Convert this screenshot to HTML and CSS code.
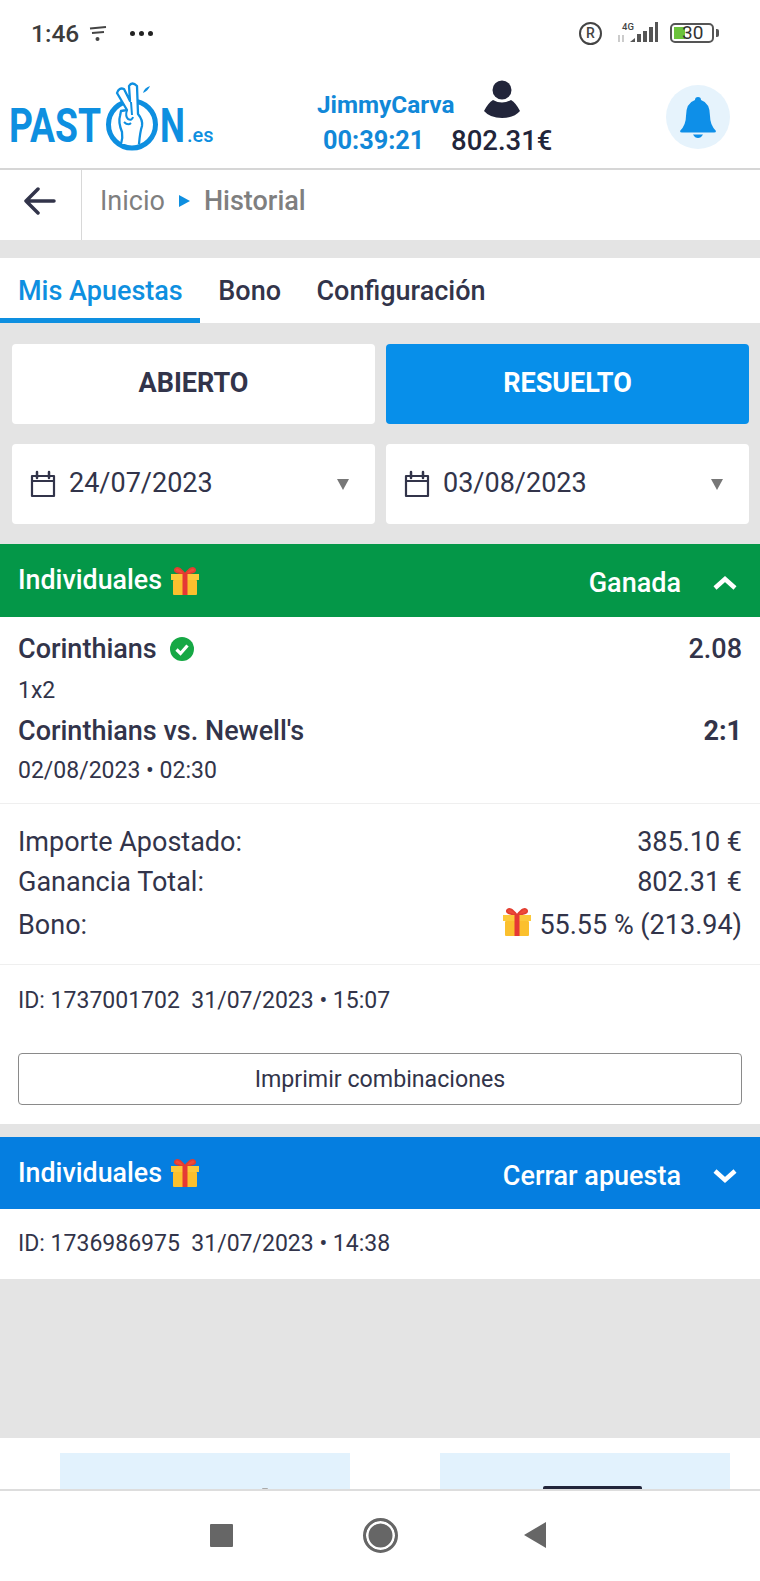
FILE: index.html
```html
<!DOCTYPE html>
<html lang="es">
<head>
  <meta charset="UTF-8">
  <meta name="viewport" content="width=device-width, initial-scale=1">
  <title>Historial</title>
  <link rel="stylesheet" href="styles.css">
</head>
<body>

  <div class="status-bar">
    <div class="status-left">
      <span class="clock">1:46</span>
      <svg class="status-wifi" width="18" height="18" viewBox="0 0 18 18"><path d="M1 4.500 L17 3M3 9 L15 8" fill="none" stroke="#444" stroke-width="2"/><circle cx="8.500" cy="15" r="2" fill="#444"/></svg>
      <span class="dots"><i></i><i></i><i></i></span>
    </div>
    <div class="status-right">
      <span class="reg">R</span>
      <svg class="signal" width="42" height="24" viewBox="0 0 42 24">
        <text x="5" y="9" font-size="9.500" font-family="Roboto" font-weight="500" fill="#444">4G</text>
        <path d="M2 21v-7M6 21v-7" stroke="#aaa" stroke-width="1.200"/>
        <path d="M13 21h5v-4zM20 21h4v-8h-4zM26 21h4V10h-4zM32 21h4V6h-4zM38 21h3V1h-3z" fill="#555"/>
      </svg>
      <span class="battery"><span class="battery-fill"></span><span class="battery-num">30</span></span>
      <span class="battery-tip"></span>
    </div>
  </div>

  <header class="site-header">
    <div class="logo">
      <svg width="220" height="88" viewBox="0 0 220 88">
        <text class="logo-text" transform="translate(9 70) scale(0.76 1)">PAST</text>
        <circle cx="132" cy="52.500" r="23.500" fill="#fff" stroke="#0e8fe0" stroke-width="5"/>
        <path d="M121 72 Q123 66 122 60 Q118 50 120 44 L121 39 L127 38 L117 21 Q119 15 124 17 L130 29 L129 14 Q132 9 137 14 L138 42 Q143 48 142 54 Q140 60 139 72" fill="#fff" stroke="#0e8fe0" stroke-width="2.300" stroke-linejoin="round"/>
        <path d="M131 30 L132 43 M127 38 Q125 44 128 47 Q132 49 133 45 M124 50 Q128 54 131 51" fill="none" stroke="#0e8fe0" stroke-width="2"/>
        <path d="M143 21 Q144 16 150 14 Q148 19 143 21Z" fill="#0e8fe0"/>
        <text class="logo-text" transform="translate(160 70) scale(0.72 1)">N</text>
        <text class="logo-es" x="187" y="70">.es</text>
      </svg>
    </div>
    <div class="account">
      <div class="account-left">
        <span class="username">JimmyCarva</span>
        <span class="timer">00:39:21</span>
      </div>
      <div class="account-right">
        <svg width="36" height="38" viewBox="0 0 36 38"><circle cx="18" cy="10" r="9.500" fill="#22253a"/><path d="M9 20 Q18 25 27 20 Q32 23 36 31 Q30 38 18 38 Q6 38 0 31 Q4 23 9 20Z" fill="#22253a"/></svg>
        <span class="balance">802.31€</span>
      </div>
    </div>
    <div class="bell">
      <svg width="36" height="41" viewBox="0 0 36 41"><path d="M18 0 Q21 0 21 3 Q30 6 30 19 Q30 28 36 34 Q36 35.500 34 35.500 H2 Q0 35.500 0 34 Q6 28 6 19 Q6 6 15 3 Q15 0 18 0Z" fill="#0e8fe8"/><path d="M13 37.500 H23 Q21 41 18 41 Q15 41 13 37.500Z" fill="#0e8fe8"/></svg>
    </div>
  </header>

  <nav class="breadcrumb">
    <div class="back">
      <svg width="32" height="28" viewBox="0 0 32 28"><path d="M14 2 L2 14 L14 26 M2 14 H30" fill="none" stroke="#32344a" stroke-width="3.500" stroke-linecap="round" stroke-linejoin="round"/></svg>
    </div>
    <div class="crumbs">
      <span class="crumb">Inicio</span>
      <span class="crumb-arrow"></span>
      <span class="crumb-current">Historial</span>
    </div>
  </nav>

  <div class="tabs">
    <a class="tab active">Mis Apuestas</a>
    <a class="tab">Bono</a>
    <a class="tab">Configuración</a>
  </div>

  <div class="toggle-row">
    <button class="toggle">ABIERTO</button>
    <button class="toggle selected">RESUELTO</button>
  </div>

  <div class="date-row">
    <div class="date-box">
      <svg class="cal" width="26" height="28" viewBox="0 0 26 28"><path d="M2 6 H24 V26 H2Z M2 11 H24" fill="none" stroke="#32344a" stroke-width="2.200" stroke-linejoin="round"/><path d="M7 2 V8 M19 2 V8" stroke="#32344a" stroke-width="2.500" stroke-linecap="round"/></svg>
      <span class="date-text">24/07/2023</span>
      <span class="caret"></span>
    </div>
    <div class="date-box">
      <svg class="cal" width="26" height="28" viewBox="0 0 26 28"><path d="M2 6 H24 V26 H2Z M2 11 H24" fill="none" stroke="#32344a" stroke-width="2.200" stroke-linejoin="round"/><path d="M7 2 V8 M19 2 V8" stroke="#32344a" stroke-width="2.500" stroke-linecap="round"/></svg>
      <span class="date-text">03/08/2023</span>
      <span class="caret"></span>
    </div>
  </div>

  <section class="bet">
    <div class="bet-head won">
      <div class="bet-title">Individuales
        <svg class="gift" width="30" height="28" viewBox="0 0 30 28"><use href="#gift-shape"/></svg>
      </div>
      <div class="bet-state">Ganada
        <svg class="chev" width="26" height="16" viewBox="0 0 26 16"><path d="M3 13 L13 4 L23 13" fill="none" stroke="#fff" stroke-width="4.500"/></svg>
      </div>
    </div>
    <div class="pick">
      <div class="line line-main">
        <span class="pick-name">Corinthians
          <svg class="tick" width="24" height="24" viewBox="0 0 24 24"><circle cx="12" cy="12" r="12" fill="#16a845"/><path d="M6.500 12.500 L10.500 16.500 L17.500 8.500" fill="none" stroke="#fff" stroke-width="3.200"/></svg>
        </span>
        <span class="odds">2.08</span>
      </div>
      <div class="line-sub market">1x2</div>
      <div class="line line-main match">
        <span>Corinthians vs. Newell's</span>
        <span class="score">2:1</span>
      </div>
      <div class="line-sub kickoff">02/08/2023 • 02:30</div>
    </div>
    <div class="totals">
      <div class="line total"><span>Importe Apostado:</span><span>385.10 €</span></div>
      <div class="line total"><span>Ganancia Total:</span><span>802.31 €</span></div>
      <div class="line total bonus"><span>Bono:</span>
        <span class="bonus-value">
          <svg class="gift-big" width="30" height="28" viewBox="0 0 30 28"><use href="#gift-shape"/></svg>
          55.55 % (213.94)
        </span>
      </div>
    </div>
    <div class="bet-id">ID: 1737001702&nbsp; 31/07/2023 • 15:07</div>
    <div class="print-wrap">
      <button class="print-btn">Imprimir combinaciones</button>
    </div>
  </section>

  <section class="bet bet-closed">
    <div class="bet-head open">
      <div class="bet-title">Individuales
        <svg class="gift" width="30" height="28" viewBox="0 0 30 28"><use href="#gift-shape"/></svg>
      </div>
      <div class="bet-state">Cerrar apuesta
        <svg class="chev" width="26" height="16" viewBox="0 0 26 16"><path d="M3 3 L13 12 L23 3" fill="none" stroke="#fff" stroke-width="4.500"/></svg>
      </div>
    </div>
    <div class="bet-id closed-id">ID: 1736986975&nbsp; 31/07/2023 • 14:38</div>
  </section>

  <div class="spacer"></div>

  <div class="promos">
    <div class="promo"><span class="promo-mark small"></span></div>
    <div class="promo"><span class="promo-mark"></span></div>
  </div>

  <div class="nav-bar">
    <span class="nav-square"></span>
    <span class="nav-home"></span>
    <span class="nav-back"></span>
  </div>

  <svg class="defs" width="0" height="0">
    <defs>
      <g id="gift-shape">
        <path d="M15 7 Q8 -2 5 2 Q3 6 15 7 Q22 -2 25 2 Q27 6 15 7Z" fill="#ee4b3a" stroke="#e23d30" stroke-width="1.500"/>
        <rect x="1" y="7" width="28" height="6" fill="#fcc93a"/>
        <rect x="3" y="13" width="24" height="15" rx="1" fill="#fbc02d"/>
        <rect x="12.500" y="7" width="5" height="21" fill="#e53935"/>
      </g>
    </defs>
  </svg>

</body>
</html>
```
FILE: styles.css
```css
* {
  box-sizing: border-box;
  margin: 0;
  padding: 0;
}

body {
  font-family: Roboto, Arial, sans-serif;
  background-color: #e4e4e4;
  color: #32344a;
  width: 760px;
  height: 1581px;
  overflow: hidden;
}

.defs {
  position: absolute;
}

/* status bar */
.status-bar {
  height: 72px;
  background: #fff;
  display: flex;
  justify-content: space-between;
  align-items: flex-start;
  padding: 19px 41px 0 31px;
}

.status-left, .status-right {
  display: flex;
  align-items: center;
  height: 28px;
}

.clock {
  font-size: 24.500px;
  font-weight: 500;
  color: #3c3c3c;
}

.status-wifi {
  margin-left: 10px;
}

.dots {
  display: flex;
  gap: 4px;
  margin-left: 23px;
}

.dots i {
  width: 5px;
  height: 5px;
  border-radius: 50%;
  background: #222;
}

.reg {
  width: 23px;
  height: 23px;
  border: 2px solid #444;
  border-radius: 50%;
  font-size: 14px;
  font-weight: 500;
  color: #444;
  display: flex;
  align-items: center;
  justify-content: center;
}

.signal {
  margin-left: 15px;
}

.battery {
  position: relative;
  width: 44px;
  height: 20px;
  margin-left: 11px;
  border: 2.500px solid #555;
  border-radius: 5px;
  padding: 2px;
}

.battery-fill {
  display: block;
  width: 11px;
  height: 100%;
  background: #6cc33c;
}

.battery-num {
  position: absolute;
  left: 10px;
  top: -2.500px;
  font-size: 19px;
  line-height: 20px;
  color: #333;
}

.battery-tip {
  width: 3px;
  height: 8px;
  background: #555;
  margin-left: 2px;
  border-radius: 0 2px 2px 0;
}

/* header */
.site-header {
  height: 98px;
  background: #fff;
  display: flex;
  align-items: flex-start;
  border-bottom: 2px solid #d6d6d6;
  position: relative;
}

.logo {
  width: 317px;
  height: 88px;
}

.logo-text {
  font-family: Roboto, sans-serif;
  font-size: 49px;
  font-weight: 700;
  fill: #0e8fe0;
}

.logo-es {
  font-family: Roboto, sans-serif;
  font-size: 20px;
  font-weight: 500;
  fill: #0e8fe0;
}

.account {
  display: flex;
}

.account-left {
  width: 134px;
  display: flex;
  flex-direction: column;
  padding-top: 20px;
  gap: 9px;
}

.username, .timer {
  color: #1188d8;
  font-weight: 700;
}

.username {
  font-size: 24.300px;
  line-height: 26px;
}

.timer {
  font-size: 25.300px;
  line-height: 28px;
  padding-left: 6px;
}

.account-right {
  display: flex;
  flex-direction: column;
  align-items: center;
  padding-top: 8px;
}

.balance {
  font-size: 27.500px;
  font-weight: 500;
  color: #22253a;
  line-height: 30px;
  margin-top: 8px;
}

.bell {
  width: 64px;
  height: 64px;
  background: #e6f3fc;
  border-radius: 50%;
  display: flex;
  align-items: center;
  justify-content: center;
  position: absolute;
  right: 30px;
  top: 13px;
}

/* breadcrumb */
.breadcrumb {
  height: 70px;
  background: #fff;
  display: flex;
}

.back {
  width: 82px;
  border-right: 1px solid #d8d8d8;
  display: flex;
  align-items: center;
  justify-content: center;
  padding: 0 2px 8px 0;
}

.crumbs {
  display: flex;
  align-items: center;
  padding: 0 0 8px 18px;
  font-size: 27px;
  color: #7f7f7f;
}

.crumb-arrow {
  width: 0;
  height: 0;
  border-left: 11px solid #0e8fe0;
  border-top: 6px solid transparent;
  border-bottom: 6px solid transparent;
  margin: 0 14px;
}

.crumb-current {
  font-weight: 500;
}

/* tabs */
.tabs {
  margin-top: 18px;
  height: 65px;
  background: #fff;
  display: flex;
}

.tab {
  font-size: 27px;
  font-weight: 500;
  line-height: 66px;
  height: 65px;
  padding: 0 17.500px 0 18px;
  border-bottom: 5px solid transparent;
  color: #32344a;
}

.tab.active {
  color: #0e8fe0;
  border-bottom-color: #0e8fe0;
}

/* filters */
.toggle-row, .date-row {
  display: grid;
  grid-template-columns: 1fr 1fr;
  gap: 11px;
  padding: 0 11px 0 12px;
}

.toggle-row {
  margin-top: 21px;
}

.date-row {
  margin-top: 20px;
}

.toggle {
  height: 80px;
  border: none;
  border-radius: 4px;
  background: #fff;
  font-family: inherit;
  font-size: 27px;
  font-weight: 700;
  color: #32344a;
  padding-bottom: 2px;
}

.toggle.selected {
  background: #078fea;
  color: #fff;
}

.date-box {
  height: 80px;
  background: #fff;
  border-radius: 4px;
  display: flex;
  align-items: center;
  padding: 0 26px 0 18px;
}

.date-text {
  font-size: 27px;
  margin-left: 13px;
  padding-bottom: 2px;
}

.caret {
  margin-left: auto;
  width: 0;
  height: 0;
  border-top: 11px solid #777;
  border-left: 6.500px solid transparent;
  border-right: 6.500px solid transparent;
}

/* bets */
.bet {
  background: #fff;
  margin-top: 20px;
}

.bet-closed {
  margin-top: 13px;
}

.bet-head {
  height: 72px;
  display: flex;
  justify-content: space-between;
  align-items: center;
  padding: 0 22px 0 18px;
  color: #fff;
}

.bet-head.won {
  height: 73px;
  background: #049748;
}

.bet-head.open {
  background: #057ee0;
}

.bet-title {
  font-size: 26.800px;
  font-weight: 500;
  display: flex;
  align-items: center;
  gap: 8px;
  padding-bottom: 1px;
}

.bet-state {
  font-size: 27px;
  font-weight: 500;
  display: flex;
  align-items: center;
  gap: 31px;
  padding-top: 5px;
}

.gift {
  margin-top: 1px;
}

.pick {
  padding: 15px 18px 17px;
  border-bottom: 1px solid #efefef;
}

.line {
  display: flex;
  justify-content: space-between;
  align-items: center;
}

.line-main {
  font-size: 27px;
  font-weight: 500;
  line-height: 34px;
}

.pick-name {
  display: flex;
  align-items: center;
  gap: 13px;
}

.line-sub {
  font-size: 23px;
  line-height: 30px;
}

.market {
  margin-top: 10px;
}

.match {
  margin-top: 8px;
}

.kickoff {
  margin-top: 8px;
}

.score {
  font-weight: 700;
}

.totals {
  padding: 18px 18px 19px;
  border-bottom: 1px solid #efefef;
}

.total {
  font-size: 27px;
  line-height: 40px;
}

.bonus {
  margin-top: 3px;
}

.bonus-value {
  display: flex;
  align-items: center;
  gap: 7px;
}

.gift-big {
  margin-top: -6px;
}

.bet-id {
  font-size: 23px;
  line-height: 30px;
  padding: 21px 18px 0;
}

.print-wrap {
  padding: 37px 18px 19px;
}

.print-btn {
  width: 100%;
  height: 52px;
  background: #fff;
  border: 1px solid #8a8a8a;
  border-radius: 4px;
  font-family: inherit;
  font-size: 23.200px;
  color: #32344a;
}

.closed-id {
  height: 70px;
  padding-top: 20px;
}

.spacer {
  height: 159px;
}

/* promos */
.promos {
  height: 51px;
  background: #fff;
  display: flex;
  padding: 15px 30px 0 60px;
  gap: 90px;
}

.promo {
  width: 290px;
  height: 36px;
  background: #e2f2fd;
  position: relative;
}

.promo-mark {
  position: absolute;
  left: 103px;
  bottom: 0;
  width: 99px;
  height: 3px;
  background: #22253a;
  border-radius: 2px 2px 0 0;
}

.promo-mark.small {
  left: 202px;
  width: 6px;
  height: 1px;
  background: #aaa;
}

/* android nav */
.nav-bar {
  height: 92px;
  background: #fff;
  border-top: 2px solid #ddd;
  display: flex;
  justify-content: center;
  align-items: center;
  padding: 0 5px 2px 0;
}

.nav-square {
  width: 23px;
  height: 23px;
  background: #666;
  border-radius: 1px;
}

.nav-home {
  width: 35px;
  height: 35px;
  border-radius: 50%;
  background: #666;
  border: 3px solid #666;
  box-shadow: inset 0 0 0 2.500px #fff;
  margin: 0 126px 0 130px;
}

.nav-back {
  width: 0;
  height: 0;
  border-right: 22px solid #666;
  border-top: 13px solid transparent;
  border-bottom: 13px solid transparent;
}
```
